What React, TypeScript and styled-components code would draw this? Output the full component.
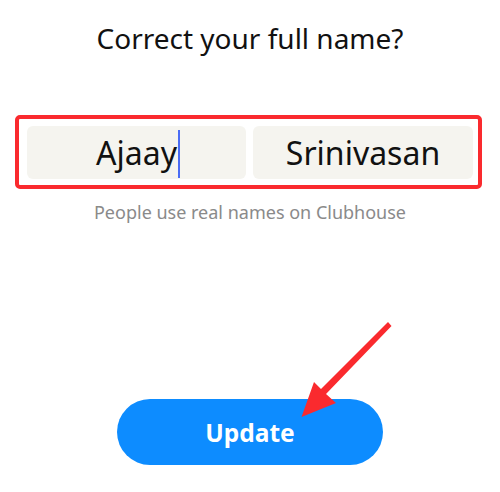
import React from "react";
import styled, { createGlobalStyle } from "styled-components";

const GlobalStyle = createGlobalStyle`
  html, body {
    margin: 0;
    padding: 0;
    background: #ffffff;
  }
  body {
    font-family: "Noto Sans", "Open Sans", sans-serif;
  }
`;

function App() {
  return (
    <>
      <GlobalStyle />
      <Screen>
        <Title>Correct your full name?</Title>
        <Highlight>
          <NameField>
            <NameText>
              Ajaay
              <Caret />
            </NameText>
          </NameField>
          <NameField>
            <NameText>Srinivasan</NameText>
          </NameField>
        </Highlight>
        <Hint>People use real names on Clubhouse</Hint>
        <UpdateButton>Update</UpdateButton>
        <Arrow width="500" height="492" viewBox="0 0 500 492">
          <polygon
            points="388,322 391.5,326 326,394 336,403 301.5,417 314,382 321,389"
            fill="#fa2a2e"
          />
        </Arrow>
      </Screen>
    </>
  );
}

const Screen = styled.div`
  position: relative;
  width: 500px;
  height: 492px;
  display: flex;
  flex-direction: column;
  align-items: center;
  overflow: hidden;
`;

const Title = styled.h1`
  margin: 20px 0 0;
  font-size: 28px;
  line-height: 36px;
  font-weight: 400;
  color: #111111;
`;

const Highlight = styled.div`
  align-self: flex-start;
  margin: 59px 0 0 15px;
  width: 446px;
  box-sizing: content-box;
  border: 4px solid #fa2a2e;
  border-radius: 5px;
  padding: 7px 5px 6px 8px;
  display: grid;
  grid-template-columns: 219px 220px;
  column-gap: 7px;
`;

const NameField = styled.div`
  height: 53px;
  background: #f5f4ef;
  border-radius: 6px;
  display: flex;
  align-items: center;
  justify-content: center;
`;

const NameText = styled.span`
  position: relative;
  font-size: 32px;
  line-height: 40px;
  color: #111111;
`;

const Caret = styled.span`
  position: absolute;
  right: -3px;
  top: -3px;
  width: 2px;
  height: 48px;
  background: #4a6cf5;
`;

const Hint = styled.p`
  margin: 11px 0 0;
  font-size: 18px;
  line-height: 24px;
  color: #8a8a8a;
`;

const UpdateButton = styled.button`
  margin-top: 175px;
  width: 266px;
  height: 66px;
  border: none;
  border-radius: 33px;
  background: #0d8cff;
  color: #ffffff;
  font-family: inherit;
  font-size: 24.5px;
  font-weight: 700;
  cursor: pointer;
`;

const Arrow = styled.svg`
  position: absolute;
  left: 0;
  top: 0;
  pointer-events: none;
`;

export default App;
